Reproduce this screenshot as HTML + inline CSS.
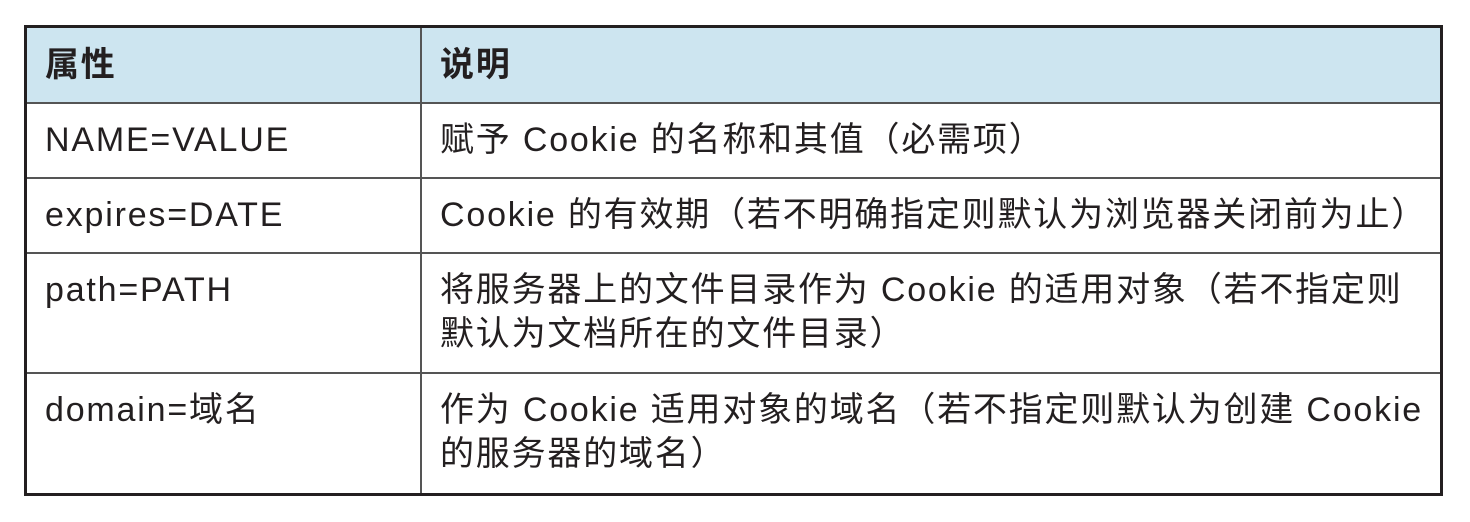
<!DOCTYPE html>
<html><head><meta charset="utf-8"><style>
body{margin:0;width:1470px;height:522px;background:#fff;position:relative;overflow:hidden;font-family:"Liberation Sans","Noto Sans CJK SC",sans-serif;color:#231f20}
.t{position:absolute;left:24px;top:25px;width:1413px;height:465px;border:3px solid #231f20;box-sizing:content-box}
.r{position:absolute;left:0;width:1413px;border-top:2px solid #555}
.c{position:absolute;font-size:34px;line-height:44px;white-space:nowrap;letter-spacing:1.8px}
.v{position:absolute;left:393px;top:0;height:465px;border-left:2px solid #555}
</style></head><body>
<div class="t">
<div style="position:absolute;left:0;top:0;width:1413px;height:74px;background:#cde5f0"></div>
<div class="r" style="top:74px"></div>
<div class="r" style="top:149px"></div>
<div class="r" style="top:224px"></div>
<div class="r" style="top:344px"></div>
<div class="v"></div>
<div class="c" style="left:18px;top:15px;font-weight:bold">属性</div>
<div class="c" style="left:413px;top:15px;font-weight:bold">说明</div>
<div class="c" style="left:18px;top:90px">NAME=VALUE</div>
<div class="c" style="left:413px;top:90px">赋予 Cookie 的名称和其值（必需项）</div>
<div class="c" style="left:18px;top:165px">expires=DATE</div>
<div class="c" style="left:413px;top:165px">Cookie 的有效期（若不明确指定则默认为浏览器关闭前为止）</div>
<div class="c" style="left:18px;top:240px">path=PATH</div>
<div class="c" style="left:413px;top:240px">将服务器上的文件目录作为 Cookie 的适用对象（若不指定则<br>默认为文档所在的文件目录）</div>
<div class="c" style="left:18px;top:360px">domain=域名</div>
<div class="c" style="left:413px;top:360px">作为 Cookie 适用对象的域名（若不指定则默认为创建 Cookie<br>的服务器的域名）</div>
</div>
</body></html>
